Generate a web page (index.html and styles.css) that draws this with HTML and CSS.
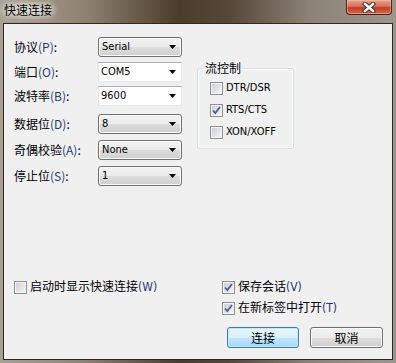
FILE: index.html
```html
<!DOCTYPE html>
<html>
<head>
  <meta http-equiv="content-type" content="text/html; charset=utf-8" />
  <title>快速连接</title>
  <link rel="stylesheet" href="styles.css">
</head>

<body>
  <div class="window">
    <div class="titlebar">
      <span class="title">快速连接</span>
      <div class="close">
        <svg width="14" height="11" viewBox="0 0 14 11">
          <path d="M3 2 L11 9 M11 2 L3 9" stroke="#3a3a3a" stroke-width="4.5" stroke-linecap="square"/>
          <path d="M3 2 L11 9 M11 2 L3 9" stroke="#fff" stroke-width="2.4" stroke-linecap="square"/>
        </svg>
      </div>
    </div>

    <div class="client">
      <div class="top">
        <div class="form">
          <span class="label">协议<span class="key">(P)</span>:</span>
          <div class="combo list">Serial</div>

          <span class="label">端口<span class="key">(O)</span>:</span>
          <div class="combo edit">COM5</div>

          <span class="label">波特率<span class="key">(B)</span>:</span>
          <div class="combo edit">9600</div>

          <span class="label">数据位<span class="key">(D)</span>:</span>
          <div class="combo list">8</div>

          <span class="label">奇偶校验<span class="key">(A)</span>:</span>
          <div class="combo list">None</div>

          <span class="label">停止位<span class="key">(S)</span>:</span>
          <div class="combo list">1</div>
        </div>

        <fieldset class="group">
          <legend>流控制</legend>
          <div class="check"><span class="box"></span><span>DTR/DSR</span></div>
          <div class="check"><span class="box checked"></span><span>RTS/CTS</span></div>
          <div class="check"><span class="box"></span><span>XON/XOFF</span></div>
        </fieldset>
      </div>

      <div class="bottom">
        <div class="bottom-left">
          <div class="check"><span class="box"></span><span>启动时显示快速连接<span class="key">(W)</span></span></div>
        </div>
        <div class="bottom-right">
          <div class="check"><span class="box checked"></span><span>保存会话<span class="key">(V)</span></span></div>
          <div class="check"><span class="box checked"></span><span>在新标签中打开<span class="key">(T)</span></span></div>
          <div class="buttons">
            <div class="button default">连接</div>
            <div class="button">取消</div>
          </div>
        </div>
      </div>
    </div>
  </div>
</body>

</html>
```

FILE: styles.css
```css
body {
  margin: 0;
  font-family: "DejaVu Sans Condensed", "Noto Sans CJK SC", sans-serif;
  font-size: 12px;
  color: #000;
}
.window {
  width: 396px;
  height: 363px;
  display: flex;
  flex-direction: column;
  background: linear-gradient(to right, #a8a093 0%, #8e8171 22%, #4c3c2b 45%, #574739 58%, #8c8277 78%, #9d968c 100%);
}
.titlebar {
  height: 23px;
  display: flex;
  justify-content: space-between;
  align-items: flex-start;
}
.title {
  font-family: "Noto Sans CJK SC", sans-serif;
  font-size: 12px;
  line-height: 20px;
  padding: 0 8px 0 4px;
  background: radial-gradient(closest-side, rgba(235,230,220,.55), rgba(235,230,220,0));
  text-shadow: 0 0 6px #fff, 0 0 10px #fff;
}
.close {
  width: 44px;
  height: 14px;
  margin-right: 4px;
  border: 1px solid #4a2218;
  border-top: none;
  border-radius: 0 0 4px 4px;
  background: linear-gradient(#e6a08e 0%, #d9705a 45%, #c23c22 55%, #d36a4e 100%);
  box-shadow: inset 0 0 0 1px rgba(255,200,190,.5);
  display: flex;
  justify-content: center;
  align-items: center;
}
.client {
  flex: 1;
  margin: 0 3px 3px 3px;
  border: 1px solid #2e2922;
  background: #f0f0f0;
  display: flex;
  flex-direction: column;
  padding: 13px 0 11px 10px;
}
.top {
  display: flex;
}
.form {
  display: grid;
  grid-template-columns: 84px 84px;
  grid-template-rows: 25px 24px 28px 26px 26px 20px;
}
.label {
  font-family: "Noto Sans CJK SC", sans-serif;
  line-height: 20px;
  height: 20px;
}
.key {
  color: #1f3a7a;
}
.combo {
  box-sizing: border-box;
  height: 20px;
  line-height: 18px;
  font-size: 11px;
  display: flex;
  justify-content: space-between;
  align-items: center;
}
.combo::after {
  content: "";
  width: 7px;
  height: 4px;
  background: #000;
  clip-path: polygon(0 0, 100% 0, 50% 100%);
}
.combo.list {
  border: 1px solid #707070;
  border-radius: 3px;
  padding: 0 5px 0 3px;
  background: linear-gradient(#f2f2f2 0%, #ebebeb 50%, #dddddd 50%, #cfcfcf 100%);
  box-shadow: inset 0 0 0 1px #fcfcfc;
}
.combo.edit {
  border: 1px solid #abadb3;
  border-color: #abadb3 #e3e9ef #e3e9ef #e2e3ea;
  padding: 0 5px 0 2px;
  background: #fff;
}
.group {
  margin: 24px 0 0 15px;
  width: 97px;
  box-sizing: border-box;
  height: 88px;
  border: 1px solid #d5dfe5;
  border-radius: 3px;
  box-shadow: inset 0 0 0 1px #fff;
  padding: 0 4px 0 6px;
  display: flex;
  flex-direction: column;
  gap: 6px;
}
.group legend {
  font-family: "Noto Sans CJK SC", sans-serif;
  line-height: 14px;
  padding: 0 1px;
}
.group .check:first-of-type {
  margin-top: 5px;
}
.group .check {
  margin-left: 6px;
}
.check {
  display: flex;
  align-items: center;
  gap: 3px;
  height: 16px;
  line-height: 16px;
  font-size: 11px;
  font-family: "DejaVu Sans Condensed", "Noto Sans CJK SC", sans-serif;
}
.bottom .check {
  font-size: 12px;
}
.box {
  box-sizing: border-box;
  width: 13px;
  height: 13px;
  flex: none;
  border: 1px solid #8e8f8f;
  background: linear-gradient(135deg, #c9ccd1 0%, #e3e4e6 55%, #f7f7f7 100%);
  box-shadow: inset 0 0 0 1px #f4f4f4;
}
.box.checked {
  background:
    url("data:image/svg+xml,%3Csvg xmlns='http://www.w3.org/2000/svg' width='11' height='11'%3E%3Cpath d='M2 5.5 L4.3 8 L9 2' fill='none' stroke='%234a5f97' stroke-width='1.8'/%3E%3C/svg%3E") center/11px 11px no-repeat,
    linear-gradient(135deg, #c9ccd1 0%, #e3e4e6 55%, #f7f7f7 100%);
}
.bottom {
  margin-top: auto;
  display: flex;
}
.bottom-left {
  flex: 1;
}
.bottom-right {
  width: 170px;
  display: flex;
  flex-direction: column;
  gap: 5px;
}
.buttons {
  display: flex;
  gap: 11px;
  margin: 6px 0 0 5px;
}
.button {
  box-sizing: border-box;
  width: 72px;
  height: 21px;
  line-height: 19px;
  text-align: center;
  font-family: "Noto Sans CJK SC", sans-serif;
  border: 1px solid #707070;
  border-radius: 3px;
  background: linear-gradient(#f2f2f2 0%, #ebebeb 50%, #dddddd 50%, #cfcfcf 100%);
  box-shadow: inset 0 0 0 1px #fcfcfc;
}
.button + .button {
  width: 73px;
}
.button.default {
  border-color: #3c7fb1;
  background: linear-gradient(#eaf6fd 0%, #d9f0fc 50%, #bee6fd 50%, #a7d9f5 100%);
  box-shadow: inset 0 0 0 1px #c4e5f6;
}
```
